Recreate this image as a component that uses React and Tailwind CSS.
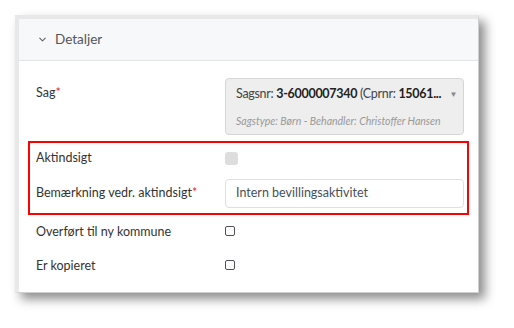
import { ChevronDown } from 'lucide-react';

const font = { fontFamily: 'Lato, "Open Sans", sans-serif' };

const Row = ({ label, required, className, labelClass = '', children }) => (
    <div className={`flex ${className}`}>
        <div className={`w-[189px] shrink-0 text-[12.5px] text-[#333] ${labelClass}`}>
            {label}
            {required && <span className="text-[#e0323c]">*</span>}
        </div>
        <div className="flex-1 min-w-0">{children}</div>
    </div>
);

const App = () => {
    return (
        <div className="w-[514px] h-[328px] bg-white pl-[15px] pt-[15px]" style={font}>
            <div className="w-[464px] h-[278px] bg-white border-l-4 border-t-4 border-[#e8e8e8] border-r border-b border-r-[#cfcfcf] border-b-[#cfcfcf] shadow-[6px_6px_10px_rgba(0,0,0,0.45)]">
                <div className="h-[42px] bg-[#f7f8fa] border-b border-[#e2e4e7] flex items-center pl-[18px] gap-[7px] text-[13.5px] text-[#555]">
                    <ChevronDown size={11} strokeWidth={2.5} className="text-[#666]" />
                    <span>Detaljer</span>
                </div>

                <div className="px-[9px] pt-[17px]">
                    <Row label="Sag" required className="pl-[8px] pr-[5px] items-start" labelClass="pt-[6px]">
                        <div className="h-[57px] rounded-[4px] border border-[#d6d6d6] bg-[#eeeeee] pl-[10px] pr-[6px] pt-[4px]">
                            <div className="flex items-center justify-between text-[12.5px] tracking-[-0.3px] text-[#444] h-[22px]">
                                <span className="whitespace-nowrap">
                                    Sagsnr: <b className="text-[#222]">3-6000007340</b> (Cprnr: <b className="text-[#222]">15061...</b>
                                </span>
                                <span className="text-[8px] text-[#888] ml-1 shrink-0">▼</span>
                            </div>
                            <div className="mt-[9px] text-[10.5px] italic text-[#999]">
                                Sagstype: Børn - Behandler: Christoffer Hansen
                            </div>
                        </div>
                    </Row>

                    <div className="mt-[6px] border-2 border-[#ff0000]">
                        <Row label="Aktindsigt" className="h-[30px] items-center pl-[6px] pr-[3px]">
                            <div className="w-[13px] h-[13px] rounded-[3px] bg-[#dddddd]" />
                        </Row>
                        <Row label="Bemærkning vedr. aktindsigt" required className="items-center pl-[6px] pr-[3px] pt-[6px] pb-[5px]">
                            <div className="h-[29px] rounded-[4px] border border-[#dcdfe3] flex items-center pl-[10px] text-[12.5px] text-[#495057]">
                                Intern bevillingsaktivitet
                            </div>
                        </Row>
                    </div>

                    <Row label="Overført til ny kommune" className="h-[34px] items-center pl-[8px] pr-[5px]">
                        <div className="w-[10px] h-[10px] rounded-[2px] border border-[#50505c] -mt-[3px]" />
                    </Row>
                    <Row label="Er kopieret" className="h-[34px] items-center pl-[8px] pr-[5px]">
                        <div className="w-[10px] h-[10px] rounded-[2px] border border-[#50505c] -mt-[3px]" />
                    </Row>
                </div>
            </div>
        </div>
    );
};

export default App;
